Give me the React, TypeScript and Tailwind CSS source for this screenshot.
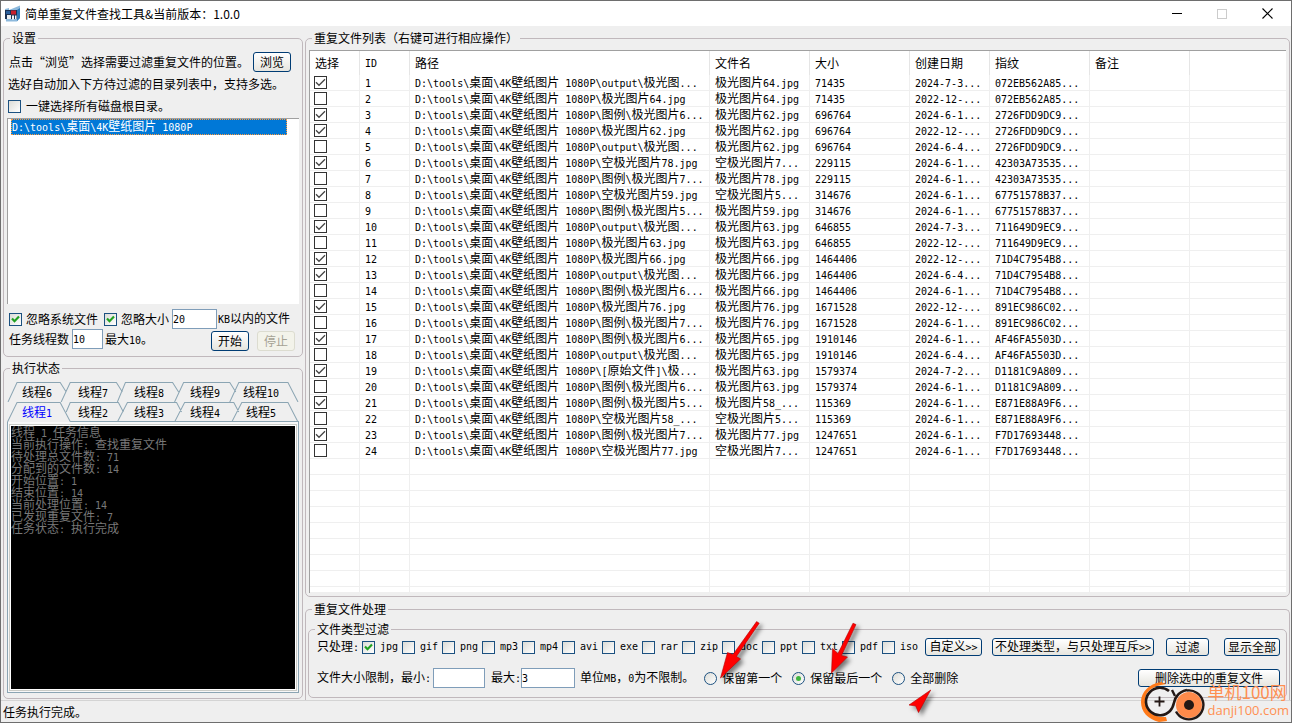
import React, { useState } from "react";

type FileRow = {
  checked: boolean;
  path: string;
  name: string;
  size: string;
  date: string;
  hash: string;
};

const ROOT = "D:\\tools\\桌面\\4K壁纸图片 1080P";

const row = (
  checked: boolean,
  path: string,
  name: string,
  size: string,
  date: string,
  hash: string
): FileRow => ({ checked, path: `${ROOT}\\${path}`, name, size, date, hash });

const files: FileRow[] = [
  row(true, "output\\极光图...", "极光图片64.jpg", "71435", "2024-7-3...", "072EB562A85..."),
  row(false, "极光图片64.jpg", "极光图片64.jpg", "71435", "2022-12-...", "072EB562A85..."),
  row(true, "图例\\极光图片6...", "极光图片62.jpg", "696764", "2024-6-1...", "2726FDD9DC9..."),
  row(true, "极光图片62.jpg", "极光图片62.jpg", "696764", "2022-12-...", "2726FDD9DC9..."),
  row(false, "output\\极光图...", "极光图片62.jpg", "696764", "2024-6-4...", "2726FDD9DC9..."),
  row(true, "空极光图片78.jpg", "空极光图片7...", "229115", "2024-6-1...", "42303A73535..."),
  row(false, "图例\\极光图片7...", "极光图片78.jpg", "229115", "2024-6-1...", "42303A73535..."),
  row(true, "空极光图片59.jpg", "空极光图片5...", "314676", "2024-6-1...", "67751578B37..."),
  row(false, "图例\\极光图片5...", "极光图片59.jpg", "314676", "2024-6-1...", "67751578B37..."),
  row(true, "output\\极光图...", "极光图片63.jpg", "646855", "2024-7-3...", "711649D9EC9..."),
  row(false, "极光图片63.jpg", "极光图片63.jpg", "646855", "2022-12-...", "711649D9EC9..."),
  row(true, "极光图片66.jpg", "极光图片66.jpg", "1464406", "2022-12-...", "71D4C7954B8..."),
  row(true, "output\\极光图...", "极光图片66.jpg", "1464406", "2024-6-4...", "71D4C7954B8..."),
  row(false, "图例\\极光图片6...", "极光图片66.jpg", "1464406", "2024-6-1...", "71D4C7954B8..."),
  row(true, "极光图片76.jpg", "极光图片76.jpg", "1671528", "2022-12-...", "891EC986C02..."),
  row(false, "图例\\极光图片7...", "极光图片76.jpg", "1671528", "2024-6-1...", "891EC986C02..."),
  row(true, "图例\\极光图片6...", "极光图片65.jpg", "1910146", "2024-6-1...", "AF46FA5503D..."),
  row(false, "output\\极光图...", "极光图片65.jpg", "1910146", "2024-6-4...", "AF46FA5503D..."),
  row(true, "[原始文件]\\极...", "极光图片63.jpg", "1579374", "2024-7-2...", "D1181C9A809..."),
  row(false, "图例\\极光图片6...", "极光图片63.jpg", "1579374", "2024-6-1...", "D1181C9A809..."),
  row(true, "图例\\极光图片5...", "极光图片58_...", "115369", "2024-6-1...", "E871E88A9F6..."),
  row(false, "空极光图片58_...", "空极光图片5...", "115369", "2024-6-1...", "E871E88A9F6..."),
  row(true, "图例\\极光图片7...", "极光图片77.jpg", "1247651", "2024-6-1...", "F7D17693448..."),
  row(false, "空极光图片77.jpg", "空极光图片7...", "1247651", "2024-6-1...", "F7D17693448..."),
];

const emptyRows = Array.from({ length: 9 }, (_, i) => i);

const columns = ["选择", "ID", "路径", "文件名", "大小", "创建日期", "指纹", "备注", ""];

const backTabs = ["线程6", "线程7", "线程8", "线程9", "线程10"];
const frontTabs = ["线程1", "线程2", "线程3", "线程4", "线程5"];

const taskLog = [
  "线程 1 任务信息",
  "当前执行操作: 查找重复文件",
  "待处理总文件数: 71",
  "分配到的文件数: 14",
  "开始位置: 1",
  "结束位置: 14",
  "当前处理位置: 14",
  "已发现重复文件: 7",
  "任务状态: 执行完成",
];

const fileTypes = [
  "jpg", "gif", "png", "mp3", "mp4", "avi", "exe",
  "rar", "zip", "doc", "ppt", "txt", "pdf", "iso",
];

// Half-width runs use a monospace face so that two of them fill one CJK cell
const T = ({ children }: { children: string }) => (
  <>
    {children.split(/([\x20-\x7e]+)/).map((part, i) =>
      i % 2 ? (
        <span key={i} className="font-['DejaVu_Sans_Mono',monospace] text-[10px]">
          {part}
        </span>
      ) : (
        part
      )
    )}
  </>
);

const Check = ({
  id,
  label,
  defaultChecked,
  plain,
}: {
  id: string;
  label?: string;
  defaultChecked?: boolean;
  plain?: boolean;
}) => (
  <span className="relative block size-[13px] shrink-0">
    <input
      id={id}
      type="checkbox"
      aria-label={label}
      defaultChecked={defaultChecked}
      className={`peer block size-[13px] appearance-none border ${
        plain
          ? "border-[#333333] bg-white"
          : "border-[#1c5180] bg-linear-to-br from-[#dcdcd7] to-white"
      }`}
    />
    <svg
      viewBox="0 0 13 13"
      className="pointer-events-none absolute inset-0 hidden size-[13px] peer-checked:block"
      fill="none"
      stroke={plain ? "#444444" : "#21a121"}
      strokeWidth={plain ? 1.3 : 2.2}
    >
      <path d={plain ? "M2 6.3 5 9.3 11 3.2" : "M3 5.6 5.5 8.2 10 3.6"} />
    </svg>
  </span>
);

const Radio = ({
  id,
  children,
  defaultChecked,
}: {
  id: string;
  children: string;
  defaultChecked?: boolean;
}) => (
  <label htmlFor={id} className="flex items-center gap-[5px]">
    <span className="relative block size-[13px]">
      <input
        id={id}
        type="radio"
        name="keep"
        defaultChecked={defaultChecked}
        className="peer block size-[13px] appearance-none rounded-full border border-[#1c5180] bg-linear-to-br from-[#dcdcd7] to-white"
      />
      <span className="pointer-events-none absolute inset-1 hidden rounded-full bg-[#3fb53f] peer-checked:block" />
    </span>
    <T>{children}</T>
  </label>
);

const XpButton = ({
  children,
  className,
  disabled,
}: {
  children: string;
  className: string;
  disabled?: boolean;
}) => (
  <button
    type="button"
    disabled={disabled}
    className={`shrink-0 rounded-[3px] border text-center whitespace-nowrap ${className} ${
      disabled
        ? "border-[#dcdcd0] bg-[#f3f3ea] text-[#a5a294]"
        : "border-[#003c74] bg-linear-to-b from-white to-[#e6e5df]"
    }`}
  >
    <T>{children}</T>
  </button>
);

const TabRow = ({
  tabs,
  paths,
  active,
  onSelect,
}: {
  tabs: string[];
  paths: string;
  active: string;
  onSelect: (tab: string) => void;
}) => (
  <div className="relative h-5 pr-2.5 pl-0.5">
    <svg
      viewBox="0 0 291 20"
      preserveAspectRatio="none"
      className="absolute inset-0 h-full w-full"
      fill="none"
      stroke="#8ba5b3"
    >
      <path d={paths} />
    </svg>
    <div className="relative flex h-full" role="tablist">
      {tabs.map((tab) => (
        <button
          key={tab}
          type="button"
          role="tab"
          aria-selected={tab === active}
          onClick={() => onSelect(tab)}
          className={`flex-1 pt-0.5 ${tab === active ? "text-[#0000ff]" : "text-black"}`}
        >
          <T>{tab}</T>
        </button>
      ))}
    </div>
  </div>
);

const TitleBar = () => (
  <header className="flex h-[25px] items-center bg-white">
    <svg viewBox="0 0 17 17" className="ml-[3px] size-[17px]">
      <path d="M1 4 5 3 5 5 16 .5 16 13 13 16.500 2 16.500Z" fill="#8db9dc" />
      <path d="M1 5h12v9H1z" fill="#1b3153" />
      <path d="M13 5 16 3v10l-3 3z" fill="#2f78b5" />
      <path d="M2 6h4v3H2z" fill="#2b5f9c" />
      <path d="M7 5.500h5v4H7z" fill="#c8202c" />
      <path d="M3 10h4v4H3z" fill="#e9edf2" />
      <path d="M8 10.500h2v4H8zM11 10.500h1.500v3.500H11z" fill="#f4f6f8" />
    </svg>
    <h1 className="ml-1 text-[12px]">简单重复文件查找工具&amp;当前版本：1.0.0</h1>
    <div className="ml-auto flex h-full">
      <button type="button" aria-label="最小化" className="flex w-[45px] items-center justify-center">
        <span className="h-px w-2.5 bg-black" />
      </button>
      <button type="button" aria-label="最大化" disabled className="flex w-[45px] items-center justify-center">
        <span className="size-2.5 border border-[#cccccc]" />
      </button>
      <button type="button" aria-label="关闭" className="flex w-[47px] items-center justify-center">
        <svg viewBox="0 0 11 11" className="size-[11px]" stroke="black" strokeWidth="1.1">
          <path d="M.5.5l10 10M10.5.5l-10 10" />
        </svg>
      </button>
    </div>
  </header>
);

const Settings = () => (
  <fieldset className="rounded-[5px] border border-[#c0b8bc] px-[3px] pb-[5px]">
    <legend className="ml-[3px] px-0.5">设置</legend>
    <div className="flex h-7 items-end justify-between pr-2 pl-0.5">
      <p className="pb-1"><T>点击“浏览”选择需要过滤重复文件的位置。</T></p>
      <XpButton className="h-5 w-[38px]">浏览</XpButton>
    </div>
    <p className="flex h-6 items-center px-px">
      选好自动加入下方待过滤的目录列表中，支持多选。
    </p>
    <label htmlFor="all-disks" className="flex h-5 items-center gap-[5px] px-px">
      <Check id="all-disks" />
      一键选择所有磁盘根目录。
    </label>
    <ul
      role="listbox"
      aria-label="目录列表"
      className="mt-0.5 h-[186px] border-t border-l border-[#a0a0a0] bg-white pl-[3px]"
    >
      <li
        role="option"
        aria-selected="true"
        className="mr-3 flex h-4 items-center border border-dotted border-[#ff9a3c] bg-[#0078d7] whitespace-pre text-white"
      >
        <span><T>{ROOT}</T></span>
      </li>
    </ul>
    <div className="mt-[5px] flex h-5 items-center pl-0.5 whitespace-nowrap">
      <label htmlFor="skip-system" className="flex items-center gap-1">
        <Check id="skip-system" defaultChecked />
        忽略系统文件
      </label>
      <label htmlFor="skip-small" className="ml-1.5 flex items-center gap-1">
        <Check id="skip-small" defaultChecked />
        忽略大小
      </label>
      <input
        aria-label="忽略大小"
        defaultValue="20"
        className="mr-px ml-[3px] h-5 w-[45px] border border-[#7f9db9] bg-white font-['DejaVu_Sans_Mono',monospace] text-[10px]"
      />
      <span><T>KB以内的文件</T></span>
    </div>
    <div className="flex h-[22px] items-start pr-1 pl-0.5 whitespace-nowrap">
      <label htmlFor="threads" className="leading-5">任务线程数</label>
      <input
        id="threads"
        defaultValue="10"
        className="mr-0.5 ml-[3px] h-5 w-[31px] border border-[#7f9db9] bg-white font-['DejaVu_Sans_Mono',monospace] text-[10px]"
      />
      <span className="leading-5"><T>最大10。</T></span>
      <div className="ml-auto flex gap-2 self-end">
        <XpButton className="h-5 w-[38px]">开始</XpButton>
        <XpButton className="h-5 w-[38px]" disabled>停止</XpButton>
      </div>
    </div>
  </fieldset>
);

const Status = () => {
  const [active, setActive] = useState("线程1");

  return (
    <fieldset className="flex flex-1 flex-col rounded-[5px] border border-[#c0b8bc] px-[3px] pb-[5px]">
      <legend className="ml-[3px] px-0.5">执行状态</legend>
      <div className="mt-2">
        <TabRow
          tabs={backTabs}
          active={active}
          onSelect={setActive}
          paths="M1 20 10 .5H53L59 10M54 20 63 .5H109L115 10M110 20 118 .5H165L171 10M167 20 176 .5H222L228 10M222 20 231 .5H280L290 20"
        />
        <TabRow
          tabs={frontTabs}
          active={active}
          onSelect={setActive}
          paths="M.5 20 10 .5H53L63 19.5M59 10 63 .5H111L116 10M110 20 120 .5H169L174 10M167 20 177 .5H226L231 10M224 20 234 .5H280L290 20M63 19.5H291"
        />
      </div>
      <div className="flex flex-1 flex-col border border-t-0 border-[#8ba5b3] bg-[#f8f8f8] p-px pt-0.5">
        <div className="flex flex-1 flex-col border border-[#c9cbc6] bg-white p-px">
          <div className="flex-1 bg-black whitespace-pre text-[#787878]">
            {taskLog.map((line) => (
              <p key={line} className="h-3"><T>{line}</T></p>
            ))}
          </div>
        </div>
      </div>
    </fieldset>
  );
};

const cell = "border-r border-b border-[#efefef] p-0 pl-[5px]";

const FileList = () => (
  <fieldset className="flex min-w-0 flex-1 flex-col rounded-[5px] border border-[#c0b8bc] px-[3px] pt-1.5 pb-[3px]">
    <legend className="ml-[3px] px-0.5">重复文件列表（右键可进行相应操作）</legend>
    <div className="flex-1 overflow-hidden border-t border-l border-[#a0a0a0] bg-white">
      <table className="w-full table-fixed border-separate border-spacing-0 text-left whitespace-nowrap">
        <colgroup>
          <col className="w-[50px]" />
          <col className="w-[50px]" />
          <col className="w-[300px]" />
          <col className="w-[100px]" />
          <col className="w-[100px]" />
          <col className="w-[80px]" />
          <col className="w-[100px]" />
          <col className="w-[100px]" />
          <col />
        </colgroup>
        <thead>
          <tr className="h-6">
            {columns.map((title) => (
              <th
                key={title}
                className="border-r border-[#e5e5e5] p-0 pl-[5px] font-normal last:border-r-0"
              >
                <T>{title}</T>
              </th>
            ))}
          </tr>
        </thead>
        <tbody>
          {files.map((file, index) => (
            <tr key={index} className="h-4">
              <td className={cell}>
                <div className="-ml-px">
                  <Check
                    id={`file-${index + 1}`}
                    label={`选择 ${index + 1}`}
                    defaultChecked={file.checked}
                    plain
                  />
                </div>
              </td>
              <td className={cell}><T>{String(index + 1)}</T></td>
              <td className={cell}><T>{file.path}</T></td>
              <td className={cell}><T>{file.name}</T></td>
              <td className={cell}><T>{file.size}</T></td>
              <td className={cell}><T>{file.date}</T></td>
              <td className={cell}><T>{file.hash}</T></td>
              <td className={cell}></td>
              <td className="border-b border-[#efefef] p-0"></td>
            </tr>
          ))}
          {emptyRows.map((n) => (
            <tr key={n} className="h-4 last:h-1.5">
              {columns.map((title) => (
                <td key={title} className="border-r border-b border-[#efefef] p-0 last:border-r-0"></td>
              ))}
            </tr>
          ))}
        </tbody>
      </table>
    </div>
  </fieldset>
);

const Arrows = () => (
  <svg
    viewBox="0 0 260 110"
    className="pointer-events-none absolute -top-3 left-[394px] h-[110px] w-[260px] drop-shadow-[3px_3px_2px_rgba(0,0,0,0.5)]"
  >
    <g fill="#fe0000" stroke="#b30000" strokeWidth="0.6">
      <path d="M56.600 18.600 59.200 20.200 36.500 53.500 40.500 56 20.500 75 27.500 49.500 33 51.500Z" />
      <path d="M153 20.200 156 21.600 141.500 52.500 147.500 54 131.500 70 132.500 45.500 138 50.500Z" />
      <path d="M230.700 87 209 102 215.700 103 218.500 109.500Z" />
    </g>
  </svg>
);

const Watermark = () => (
  <div className="pointer-events-none absolute right-0.5 bottom-0 flex items-center gap-0.5 text-[#ff8f52]">
    <svg viewBox="0 0 64 42" className="h-[42px] w-16" fill="none">
      <path
        d="M25 4 20 2C8 4 0 12 0 22s7 17 18 20l8-1-1-4C12 38 4 30 4 21 4 12 10 6 25 4Z"
        fill="#ff7a1a"
      />
      <path
        d="M28 11C22 6 14 7 9 12c-6 6-5 15 1 20 6 5 14 4 19-1 5-5 3-11 7-15 2-3 5-5 10-6"
        stroke="#231815"
        strokeWidth="2.6"
      />
      <path d="M31 10l3 6" stroke="#231815" strokeWidth="2.4" />
      <path d="M13.500 21.500h10M18.500 16.500v10" stroke="#231815" strokeWidth="1.8" />
      <circle cx="48" cy="25" r="13" fill="#ff8a4a" />
      <path d="M46 10.500a14.500 14.500 0 1 1-11 21" stroke="#231815" strokeWidth="2.4" />
      <circle cx="48" cy="25" r="5" fill="#231815" />
    </svg>
    <div>
      <p className="text-[17px] leading-[18px]">单机100网</p>
      <p className="font-['Open_Sans',sans-serif] text-[13px] leading-[18px]">danji100.com</p>
    </div>
  </div>
);

const Processing = () => (
  <fieldset className="relative min-w-0 rounded-t-[5px] border border-b-0 border-[#c0b8bc] px-0.5 pt-2 pb-0.5">
    <legend className="ml-1 px-0.5">重复文件处理</legend>
    <fieldset className="min-w-0 rounded-[5px] border border-[#c0b8bc] pr-1.5 pb-[7px] pl-2">
      <legend className="-ml-0.5 px-0.5">文件类型过滤</legend>
      <div className="flex h-6 items-center">
        <span className="w-[45px] shrink-0"><T>只处理:</T></span>
        {fileTypes.map((type) => (
          <label key={type} htmlFor={`type-${type}`} className="flex w-10 shrink-0 items-center gap-[5px]">
            <Check id={`type-${type}`} defaultChecked={type === "jpg"} />
            <T>{type}</T>
          </label>
        ))}
        <XpButton className="ml-[3px] h-[18px] w-[57px]">自定义&gt;&gt;</XpButton>
        <XpButton className="ml-2.5 h-[18px] w-[162px]">不处理类型，与只处理互斥&gt;&gt;</XpButton>
        <XpButton className="ml-auto h-[18px] w-[43px]">过滤</XpButton>
        <XpButton className="ml-[15px] h-[18px] w-14">显示全部</XpButton>
      </div>
      <div className="mt-[7px] flex h-6 items-center whitespace-nowrap">
        <label htmlFor="min-size"><T>文件大小限制，最小:</T></label>
        <input
          id="min-size"
          className="ml-0.5 h-5 w-[52px] border border-[#7f9db9] bg-white font-['DejaVu_Sans_Mono',monospace] text-[10px]"
        />
        <label htmlFor="max-size" className="ml-1.5"><T>最大:</T></label>
        <input
          id="max-size"
          defaultValue="3"
          className="h-5 w-[54px] border border-[#7f9db9] bg-white font-['DejaVu_Sans_Mono',monospace] text-[10px]"
        />
        <span className="mr-2.5 ml-[5px]"><T>单位MB，0为不限制。</T></span>
        <div className="flex gap-2.5">
          <Radio id="keep-first">保留第一个</Radio>
          <Radio id="keep-last" defaultChecked>保留最后一个</Radio>
          <Radio id="delete-all">全部删除</Radio>
        </div>
        <XpButton className="ml-auto h-[18px] w-[142px]">删除选中的重复文件</XpButton>
      </div>
    </fieldset>
    <Arrows />
  </fieldset>
);

export default function App() {
  return (
    <div className="relative flex min-h-screen flex-col border border-[#6e6e6e] bg-[#efefef] font-['Noto_Sans_CJK_SC',sans-serif] text-[12px] leading-3 text-black">
      <TitleBar />
      <main className="flex flex-1 gap-0.5 pt-1.5 pr-px pl-0.5">
        <div className="flex w-[300px] shrink-0 flex-col gap-[5px] pb-px">
          <Settings />
          <Status />
        </div>
        <div className="flex min-w-0 flex-1 flex-col gap-1.5">
          <FileList />
          <Processing />
        </div>
      </main>
      <footer className="flex h-[22px] items-center border-t border-[#d4d4d4] px-0.5">
        任务执行完成。
      </footer>
      <Watermark />
    </div>
  );
}
